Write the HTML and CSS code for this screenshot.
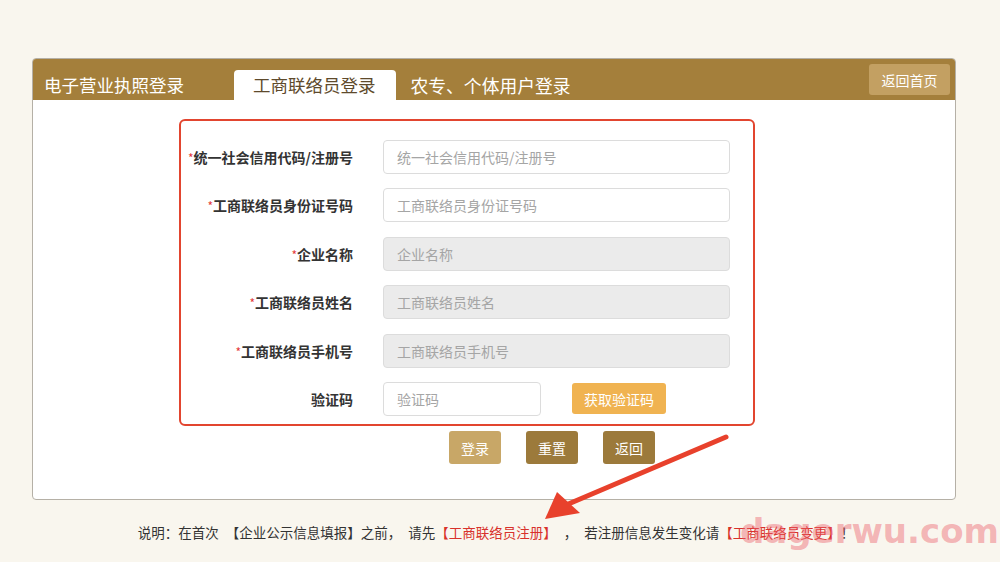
FILE: index.html
```html
<!DOCTYPE html>
<html lang="zh-CN">
<head>
<meta charset="UTF-8" />
<title>工商联络员登录</title>
<link rel="stylesheet" href="styles.css">
</head>
<body>

<div class="page">
    <div class="panel">
        <!-- header with tabs -->
        <div class="panel-head">
            <div class="tab tab-first">电子营业执照登录</div>
            <div class="tab tab-active">工商联络员登录</div>
            <div class="tab tab-last">农专、个体用户登录</div>
            <button class="btn-home">返回首页</button>
        </div>

        <div class="panel-body">
            <div class="form-box">
                <div class="row">
                    <label class="lbl"><span class="req">*</span>统一社会信用代码/注册号</label>
                    <input class="ipt" type="text" placeholder="统一社会信用代码/注册号">
                </div>
                <div class="row">
                    <label class="lbl"><span class="req">*</span>工商联络员身份证号码</label>
                    <input class="ipt" type="text" placeholder="工商联络员身份证号码">
                </div>
                <div class="row">
                    <label class="lbl"><span class="req">*</span>企业名称</label>
                    <input class="ipt" type="text" placeholder="企业名称" disabled>
                </div>
                <div class="row">
                    <label class="lbl"><span class="req">*</span>工商联络员姓名</label>
                    <input class="ipt" type="text" placeholder="工商联络员姓名" disabled>
                </div>
                <div class="row">
                    <label class="lbl"><span class="req">*</span>工商联络员手机号</label>
                    <input class="ipt" type="text" placeholder="工商联络员手机号" disabled>
                </div>
                <div class="row">
                    <label class="lbl">验证码</label>
                    <input class="ipt ipt-short" type="text" placeholder="验证码">
                    <button class="btn-code">获取验证码</button>
                </div>
            </div>

            <div class="actions">
                <button class="btn btn-login">登录</button>
                <button class="btn">重置</button>
                <button class="btn">返回</button>
            </div>
        </div>
    </div>

    <p class="note">说明：在首次 【企业公示信息填报】之前， 请先<span class="red">【工商联络员注册】</span> ， 若注册信息发生变化请<span class="red">【工商联络员变更】</span>！</p>
</div>

<!-- annotation arrow drawn over the page -->
<svg class="arrow" width="1000" height="562" viewBox="0 0 1000 562">
    <line x1="726" y1="437" x2="566" y2="505" stroke="#e8412c" stroke-width="5" stroke-linecap="round"/>
    <polygon points="545,519 557,492 580,513" fill="#e8412c"/>
</svg>

<div class="watermark">dagerwu.com</div>

</body>
</html>
```

FILE: styles.css
```css
/* --- Layout --------------------------------------------------------- */
body{
    margin:0;
    background:#f9f6ee;
    font-family:"Noto Sans CJK SC","Noto Sans",sans-serif;
    color:#333;
}
.page{
    padding:58px 44px 0 32px;
}
.panel{
    height:442px;
    box-sizing:border-box;
    background:#fff;
    border:1px solid #b5b0a6;
    border-radius:4px;
    overflow:hidden;
}

/* --- Header / tabs -------------------------------------------------- */
.panel-head{
    height:41px;
    background:#a47f3b;
    display:flex;
    align-items:flex-end;
    padding-left:11px;
}
.tab{
    height:30px;
    line-height:30px;
    font-size:17.5px;
    color:#fff;
}
.tab-first{ margin-right:50px; }
.tab-active{
    background:#fff;
    color:#5e4a2c;
    border-radius:4px 4px 0 0;
    padding:0 20px 0 19px;
}
.tab-last{ margin-left:15px; font-size:17.8px; }
.btn-home{
    margin-left:auto;
    margin-right:5px;
    align-self:center;
    height:31px;
    width:81px;
    border:none;
    border-radius:3px;
    background:#c3a062;
    color:#fff;
    font-family:inherit;
    font-size:14px;
}

/* --- Form ----------------------------------------------------------- */
.panel-body{
    padding:19px 0 0 146px;
}
.form-box{
    width:576px;
    height:307px;
    box-sizing:border-box;
    border:2px solid #e2452f;
    border-radius:6px;
    padding-top:19px;
}
.row{
    display:flex;
    align-items:center;
    height:34px;
    margin-bottom:14.4px;
}
.lbl{
    width:172px;
    text-align:right;
    font-size:14px;
    font-weight:bold;
    color:#333;
}
.req{
    color:#e4393c;
    font-size:12px;
    font-weight:normal;
}
.ipt{
    margin-left:30px;
    width:347px;
    height:34px;
    box-sizing:border-box;
    border:1px solid #dcdcdc;
    border-radius:4px;
    padding:0 13px;
    font-family:inherit;
    font-size:14px;
    background:#fff;
    outline:none;
}
.ipt::placeholder{ color:#a5a5a5; }
.ipt:disabled{ background:#ebebeb; }
.ipt-short{ width:158px; }
.btn-code{
    margin-left:31px;
    width:94px;
    height:31px;
    border:none;
    border-radius:3px;
    background:#f0b351;
    color:#fff;
    font-family:inherit;
    font-size:14px;
}

/* --- Action buttons ------------------------------------------------- */
.actions{
    display:flex;
    gap:25px;
    padding:5px 0 0 270px;
}
.btn{
    width:52px;
    height:33px;
    border:none;
    border-radius:3px;
    background:#9c7a3b;
    color:#fff;
    font-family:inherit;
    font-size:14px;
}
.btn-login{ background:#c8a767; }

/* --- Note ----------------------------------------------------------- */
.note{
    margin:22px 0 0;
    text-align:center;
    font-size:13.5px;
    word-spacing:4px;
    color:#333;
    padding-left:4px;
}
.red{ color:#d8312b; }

/* --- Overlays ------------------------------------------------------- */
.arrow{
    position:absolute;
    left:0;
    top:0;
    pointer-events:none;
}
.watermark{
    position:absolute;
    left:740px;
    top:511px;
    font-family:"DejaVu Sans",sans-serif;
    font-weight:bold;
    font-size:34px;
    color:rgba(236,100,110,.45);
    pointer-events:none;
}
```
